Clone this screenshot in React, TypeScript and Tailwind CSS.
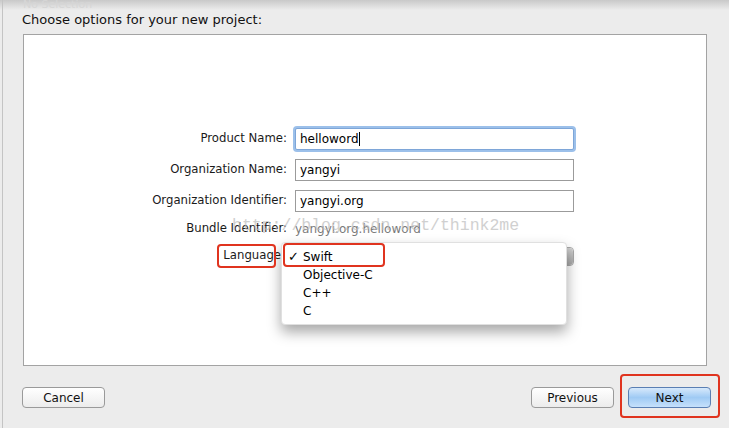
import React from 'react';

const font = { fontFamily: '"DejaVu Sans", "Liberation Sans", sans-serif' };

const Field: React.FC<{ label: string; value: string; focused?: boolean }> = ({ label, value, focused }) => (
  <div className="flex items-center h-[22px]">
    <div className="w-[271px] text-right pr-[8px] text-[11.7px] text-[#1a1a1a]">{label}</div>
    <div
      className={
        focused
          ? 'w-[279px] h-[22px] bg-white border border-[#7ea6d8] shadow-[0_0_0_2px_#9cc0ea] rounded-[2px] flex items-center px-[4px] text-[12px] text-black'
          : 'w-[279px] h-[22px] bg-white border border-[#9b9b9b] flex items-center px-[4px] text-[12px] text-black'
      }
    >
      {value}
      {focused && <span className="w-px h-[14px] bg-black" />}
    </div>
  </div>
);

const Btn: React.FC<{ label: string; primary?: boolean }> = ({ label, primary }) => (
  <button
    className={
      primary
        ? 'w-[83px] h-[21px] rounded-[4px] border border-[#5a7fb3] bg-gradient-to-b from-[#d7e9fb] via-[#9fcaf4] to-[#c6e1fb] text-[12px] text-[#111]'
        : 'w-[83px] h-[21px] rounded-[4px] border border-[#9a9a9a] bg-gradient-to-b from-white to-[#ececec] text-[12px] text-[#111]'
    }
  >
    {label}
  </button>
);

export default function App() {
  return (
    <div className="relative w-[729px] h-[428px] bg-[#ececec] overflow-hidden" style={font}>
      {/* top shadow from window chrome */}
      <div className="absolute left-0 top-0 w-full h-[10px] bg-gradient-to-b from-[#c9c9c9] to-[#ececec]" />
      <div className="absolute left-[23px] top-[-3px] text-[11px] text-[#d6d6d6]">No Selection</div>
      <div className="absolute left-[2px] top-0 w-px h-full bg-[#c4c4c4]" />

      <div className="relative pt-[10px] pl-[22px] text-[13px] text-[#111] h-[34px]">Choose options for your new project:</div>

      <div className="relative mx-[22px] ml-[23px] h-[332px] bg-white border border-[#a3a3a3]">
        <div className="flex flex-col pt-[93px] gap-[9px]">
          <Field label="Product Name:" value="helloword" focused />
          <Field label="Organization Name:" value="yangyi" />
          <Field label="Organization Identifier:" value="yangyi.org" />
          <div className="flex items-center h-[18px] -mt-[1px]">
            <div className="w-[271px] text-right pr-[8px] text-[11.7px] text-[#1a1a1a]">Bundle Identifier:</div>
            <div className="text-[12px] text-[#7a7a7a]">yangyi.org.helloword</div>
          </div>
          <div className="flex items-center h-[20px] -mt-[1px]">
            <div className="w-[260px] text-right pr-[3px] text-[11.7px] text-[#1a1a1a]">Language</div>
            <div className="w-[290px] h-[19px] rounded-[4px] border border-[#a8a8a8] bg-gradient-to-b from-white to-[#eeeeee] flex justify-end">
              <div className="w-[8px] h-full rounded-r-[4px] bg-gradient-to-b from-[#d0d0d0] to-[#a9a9a9]" />
            </div>
          </div>
        </div>

        {/* open popup menu */}
        <div className="absolute left-[257px] top-[207px] w-[286px] h-[83px] bg-white rounded-[4px] shadow-[0_7px_14px_rgba(0,0,0,0.35)] border border-[#e0e0e0] pt-[5px] text-[12px] text-black">
          {['Swift', 'Objective-C', 'C++', 'C'].map((item, i) => (
            <div key={item} className="flex items-center h-[18px]">
              <span className="w-[21px] pl-[6px] text-[13px]">{i === 0 ? '✓' : ''}</span>
              <span>{item}</span>
            </div>
          ))}
        </div>
      </div>

      <div className="relative flex items-center justify-between pl-[22px] pr-[18px] pt-[21px]">
        <Btn label="Cancel" />
        <div className="flex gap-[14px]">
          <Btn label="Previous" />
          <Btn label="Next" primary />
        </div>
      </div>

      {/* watermark */}
      <div
        className="absolute left-[232px] top-[214px] text-[16.5px] text-[#bdbdbd] opacity-70 pointer-events-none"
        style={{ fontFamily: '"Liberation Mono", monospace' }}
      >
        http://blog.csdn.net/think2me
      </div>

      {/* red annotation boxes */}
      <div className="absolute left-[217px] top-[244px] w-[59px] h-[24px] border-2 border-[#e0341f] rounded-[4px]" />
      <div className="absolute left-[283px] top-[243px] w-[102px] h-[24px] border-2 border-[#e0341f] rounded-[4px]" />
      <div className="absolute left-[620px] top-[374px] w-[100px] h-[44px] border-2 border-[#e0341f] rounded-[4px]" />
    </div>
  );
}
